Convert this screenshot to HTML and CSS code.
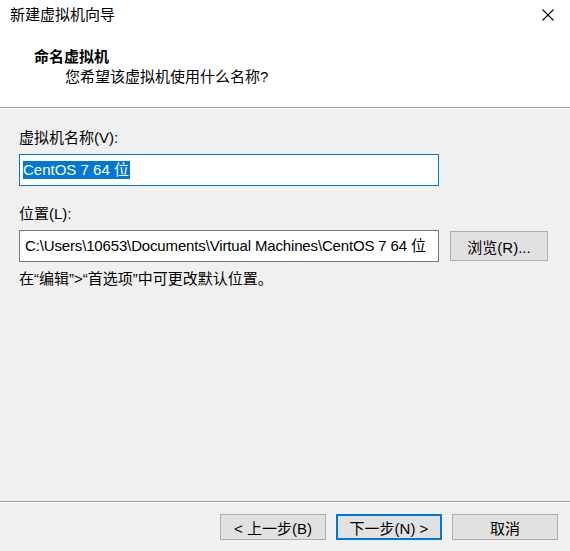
FILE: index.html
```html
<!DOCTYPE html>
<html lang="zh-CN">
<head>
<meta charset="utf-8">
<title>新建虚拟机向导</title>
<link rel="stylesheet" href="styles.css">
</head>
<body>
<div class="window">
  <div class="titlebar">
    <span class="title">新建虚拟机向导</span>
    <svg class="close" width="12" height="12" viewBox="0 0 12 12"><path d="M0.5 0.5L11.5 11.5M11.5 0.5L0.5 11.5" stroke="#000" stroke-width="1.1" fill="none"/></svg>
  </div>
  <div class="header">
    <div class="h-title">命名虚拟机</div>
    <div class="h-sub">您希望该虚拟机使用什么名称?</div>
  </div>
  <div class="content">
    <div class="label label-first">虚拟机名称(V):</div>
    <div class="field field-focus"><span class="sel">CentOS 7 64 位</span></div>
    <div class="label label-second">位置(L):</div>
    <div class="row">
      <div class="field field-path">C:\Users\10653\Documents\Virtual Machines\CentOS 7 64 位</div>
      <div class="btn btn-browse">浏览(R)...</div>
    </div>
    <div class="hint">在“编辑”&gt;“首选项”中可更改默认位置。</div>
  </div>
  <div class="footer">
    <div class="btn btn-nav">&lt; 上一步(B)</div>
    <div class="btn btn-nav btn-default">下一步(N) &gt;</div>
    <div class="btn btn-nav">取消</div>
  </div>
</div>
</body>
</html>
```
FILE: styles.css
```css
html, body {
  margin: 0;
  padding: 0;
}
body {
  width: 570px;
  height: 551px;
  overflow: hidden;
  background: #f0f0f0;
  font-family: "Liberation Sans", "Noto Sans CJK SC", sans-serif;
  font-size: 15px;
  color: #000;
}
.window {
  display: flex;
  flex-direction: column;
  height: 551px;
}
.titlebar {
  height: 33px;
  background: #fff;
  display: flex;
  align-items: center;
  justify-content: space-between;
  padding: 0 16px 0 10px;
}
.title {
  line-height: 20px;
  margin-top: -4px;
}
.close {
  margin-top: -4px;
}
.header {
  background: #fff;
  height: 75px;
  border-bottom: 1px solid #a0a0a0;
  box-shadow: 0 1px 0 #fff;
  box-sizing: border-box;
  padding-top: 14px;
}
.h-title {
  font-weight: bold;
  line-height: 20px;
  padding-left: 34px;
}
.h-sub {
  line-height: 20px;
  padding-left: 65px;
}
.content {
  flex: 1;
  padding: 0 0 0 19px;
}
.label {
  line-height: 20px;
}
.label-first {
  margin-top: 20px;
  margin-bottom: 6px;
}
.label-second {
  margin-top: 18px;
  margin-bottom: 6px;
}
.field {
  width: 420px;
  height: 32px;
  box-sizing: border-box;
  border: 1px solid #7a7a7a;
  background: #fff;
  line-height: 30px;
  padding-left: 5px;
  white-space: nowrap;
  overflow: hidden;
}
.field-path {
  letter-spacing: -0.15px;
}
.field-focus {
  border-color: #0078d7;
  padding-left: 3px;
}
.sel {
  background: #0078d7;
  color: #fff;
  display: inline-block;
  line-height: 18px;
  padding-right: 1px;
}
.row {
  display: flex;
  align-items: center;
  gap: 11px;
}
.btn {
  box-sizing: border-box;
  border: 1px solid #adadad;
  background: #e1e1e1;
  display: flex;
  align-items: center;
  justify-content: center;
}
.btn-browse {
  width: 98px;
  height: 30px;
}
.hint {
  line-height: 20px;
  margin-top: 7px;
}
.footer {
  border-top: 1px solid #a0a0a0;
  box-shadow: inset 0 1px 0 #fff;
  height: 50px;
  box-sizing: border-box;
  display: flex;
  justify-content: flex-end;
  align-items: flex-start;
  gap: 10px;
  padding: 12px 12px 0 0;
}
.btn-nav {
  width: 106px;
  height: 26px;
}
.btn-default {
  border: 2px solid #0078d7;
}
```
